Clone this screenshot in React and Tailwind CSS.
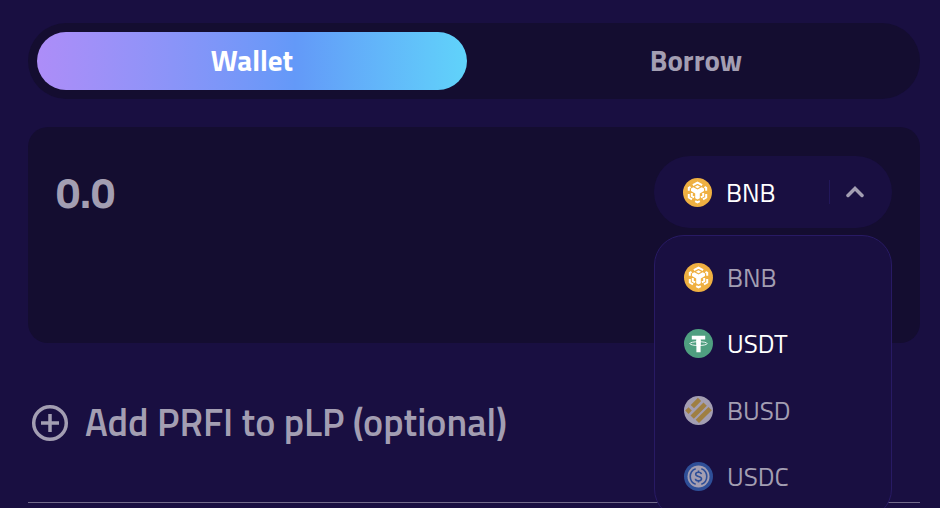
import { useState } from "react";

function BnbIcon() {
  return (
    <svg viewBox="0.5 0.5 29 29" className="size-[29px] shrink-0" aria-hidden="true">
      <circle cx="15" cy="15" r="14.5" fill="#efb041" />
      <g fill="none" stroke="#fff" strokeWidth="2">
        <path d="M10.4 7.7 15 5.100l4.600 2.600M22 9.300l1.700 1v3M23.700 16.500v3.500l-3.200 1.900M17.300 23.600 15 24.900l-2.300-1.300M9.500 21.900 6.300 20v-3.500M6.300 13.300v-3l1.700-1" />
        <path d="M9.300 15.500v3l2.300 1.300M20.700 15.500v3l-2.300 1.300" />
      </g>
      <path d="m15 7.700 2.600 1.500L15 10.700l-2.600-1.500z" fill="#fff" />
      <path d="m8.500 11 2.300-1.300 4.200 2.400 4.200-2.400 2.300 1.300v2.600l-4.200 2.400v4.800L15 22.100l-2.300-1.300V16l-4.200-2.400z" fill="#fff" />
    </svg>
  );
}

function UsdtIcon() {
  return (
    <svg viewBox="0.5 0.5 29 29" className="size-[29px] shrink-0" aria-hidden="true">
      <circle cx="15" cy="15" r="14.5" fill="#4f9f80" />
      <path d="M8.300 7.200h13.400v3.800h-4.600v12.800h-4.200V11H8.300z" fill="#fff" />
      <ellipse cx="15" cy="15.100" rx="8.600" ry="1.900" fill="none" stroke="#fff" strokeWidth="0.9" />
      <path d="M12.900 11h4.200v5.300h-4.200z" fill="#fff" />
    </svg>
  );
}

function BusdIcon() {
  return (
    <svg viewBox="0.5 0.5 29 29" className="size-[29px] shrink-0" aria-hidden="true">
      <circle cx="15" cy="15" r="14.5" fill="#a39eb2" />
      <g fill="#9f7f42">
        <path d="m14.400 2.300 3.300 3.300-7.200 7.200-3.300-3.300z" />
        <path d="m5 11.800 3.300 3.300L5 18.400l-3.300-3.300z" />
        <path d="m20 7 3.300 3.300-13 13L7 20z" />
        <path d="m25 11.500 3.300 3.300-12.800 12.800-3.300-3.300z" />
      </g>
    </svg>
  );
}

function UsdcIcon() {
  return (
    <svg viewBox="0.5 0.5 29 29" className="size-[29px] shrink-0" aria-hidden="true">
      <circle cx="15" cy="15" r="14.5" fill="#2e4f98" />
      <circle cx="15" cy="15" r="11" fill="#a39eb2" />
      <g fill="none" stroke="#2e4f98" strokeWidth="1.6">
        <path d="M12.200 7.200a8.300 8.300 0 0 0 0 15.600M17.800 7.200a8.300 8.300 0 0 1 0 15.600" />
        <path d="M17.900 12.700c-.2-1.200-1.300-1.900-2.900-1.900s-2.800.8-2.800 2c0 3 5.800 1.400 5.800 4.500 0 1.200-1.200 2-3 2s-3-.8-3.100-2.100M15 9v1.800M15 19.200V21" />
      </g>
    </svg>
  );
}

const tokens = [
  { name: "BNB", Icon: BnbIcon },
  { name: "USDT", Icon: UsdtIcon },
  { name: "BUSD", Icon: BusdIcon },
  { name: "USDC", Icon: UsdcIcon },
];

export default function App() {
  const [tab, setTab] = useState("Wallet");
  const [amount, setAmount] = useState("");
  const [token, setToken] = useState(tokens[0]);
  const [open, setOpen] = useState(true);

  return (
    <main className="h-screen overflow-hidden bg-[#190f41] px-7 pr-5 pt-[23px] font-['Titillium_Web','Roboto',sans-serif] text-[#a39eb2]">
      <div role="tablist" className="flex gap-[14px] rounded-full bg-[#140d30] p-[9px]">
        {["Wallet", "Borrow"].map((name) => (
          <button
            key={name}
            type="button"
            role="tab"
            aria-selected={tab === name}
            onClick={() => setTab(name)}
            className={
              tab === name
                ? "h-[58px] flex-1 rounded-full bg-linear-to-r from-[#ad8df8] via-[#6399f8] via-60% to-[#60d3fa] text-[29px] font-bold text-white"
                : "h-[58px] flex-1 rounded-full text-[29px] font-bold text-[#a39eb2]"
            }
          >
            {name}
          </button>
        ))}
      </div>

      <section className="mt-7 flex h-[216px] items-start justify-between rounded-[20px] bg-[#140d30] px-7 pt-[29px]">
        <input
          type="text"
          aria-label="Amount"
          placeholder="0.0"
          value={amount}
          onChange={(e) => setAmount(e.target.value)}
          className="h-[72px] min-w-0 flex-1 bg-transparent text-[43px] font-bold outline-none placeholder:text-[#a39eb2]"
        />
        <div className="relative w-[238px] shrink-0">
          <button
            type="button"
            aria-haspopup="listbox"
            aria-expanded={open}
            onClick={() => setOpen(!open)}
            className="flex h-18 w-full items-center rounded-full bg-[#190f41] pl-[29px] pr-7 text-[26px] text-white"
          >
            <token.Icon />
            <span className="ml-[14px] flex-1 text-left">{token.name}</span>
            <span className="mr-4 h-6 w-px bg-[#22175a]" />
            <svg viewBox="0 0 18 12" className="h-3 w-[18px]" fill="none" stroke="#a39eb2" strokeWidth="3.5" strokeLinecap="round" aria-hidden="true">
              <path d="M2 9.500 9 2.500l7 7" />
            </svg>
          </button>
          {open && (
            <ul role="listbox" aria-label="Token" className="absolute inset-x-0 top-[79px] flex h-[284px] flex-col rounded-[30px] border border-[#281a64] bg-[#190f41] py-2">
              {tokens.map((item) => (
                <li key={item.name} role="option" aria-selected={item === token} className="flex-1">
                  <button
                    type="button"
                    onClick={() => {
                      setToken(item);
                      setOpen(false);
                    }}
                    className={
                      item.name === "USDT"
                        ? "flex h-full w-full items-center gap-[14px] pl-[29px] text-[26px] text-white"
                        : "flex h-full w-full items-center gap-[14px] pl-[29px] text-[26px] text-[#a39eb2] hover:text-white"
                    }
                  >
                    <item.Icon />
                    {item.name}
                  </button>
                </li>
              ))}
            </ul>
          )}
        </div>
      </section>

      <div className="border-b border-[#726b8b] py-[50px]">
        <button type="button" className="flex h-[59px] items-center gap-4 pl-[3px] text-[38px] font-semibold">
          <svg viewBox="0 0 38 38" className="size-[38px] shrink-0" fill="none" stroke="#a39eb2" strokeWidth="3.5" aria-hidden="true">
            <circle cx="19" cy="19" r="16.300" />
            <path d="M19 10v18M10 19h18" />
          </svg>
          Add PRFI to pLP (optional)
        </button>
      </div>
    </main>
  );
}
